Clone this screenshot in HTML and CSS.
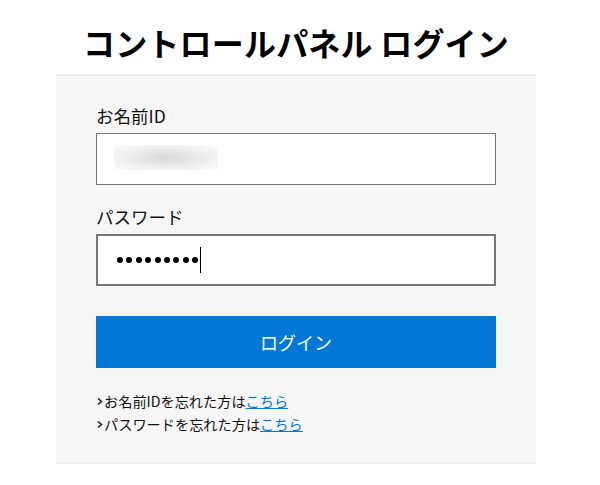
FILE: index.html
```html
<!DOCTYPE html>
<html lang="ja">
<head>
<meta charset="utf-8">
<title>コントロールパネル ログイン</title>
<link rel="stylesheet" href="styles.css">
</head>
<body>
<div class="wrap">
  <h1 class="title">コントロールパネル ログイン</h1>
  <form class="panel">
    <div class="group">
      <label class="label" for="uid">お名前ID</label>
      <input class="input input-id" id="uid" type="text" value="" readonly>
    </div>
    <div class="group">
      <label class="label">パスワード</label>
      <div class="input input-focus">
        <span class="dots"><i></i><i></i><i></i><i></i><i></i><i></i><i></i><i></i><i></i></span><span class="caret"></span>
      </div>
    </div>
    <button class="btn" type="button">ログイン</button>
    <ul class="links">
      <li><svg class="chev" width="8" height="9" viewBox="0 0 8 9"><path d="M2 1.5 L5.5 4.5 L2 7.5" fill="none" stroke="#222" stroke-width="1.6"/></svg>お名前IDを忘れた方は<a href="#">こちら</a></li>
      <li><svg class="chev" width="8" height="9" viewBox="0 0 8 9"><path d="M2 1.5 L5.5 4.5 L2 7.5" fill="none" stroke="#222" stroke-width="1.6"/></svg>パスワードを忘れた方は<a href="#">こちら</a></li>
    </ul>
  </form>
</div>
</body>
</html>
```
FILE: styles.css
```css
* { box-sizing: border-box; }
html, body { margin: 0; padding: 0; background: #fff; }
body {
  font-family: "Noto Sans CJK JP", "Noto Sans", sans-serif;
  color: #111;
}
.wrap {
  width: 480px;
  margin-left: 56px;
}
.title {
  margin: 22px 0 12px;
  font-size: 32px;
  line-height: 40px;
  font-weight: 700;
  text-align: center;
  color: #000;
  letter-spacing: 0.2px;
}
.panel {
  display: flex;
  flex-direction: column;
  background: #f6f6f6;
  border-top: 2px solid #ebebeb;
  border-bottom: 2px solid #ebebeb;
  padding: 28px 40px 26px;
  margin: 0;
}
.group {
  display: flex;
  flex-direction: column;
  margin-bottom: 20px;
}
.label {
  font-size: 17.5px;
  line-height: 24px;
  margin-bottom: 5px;
  color: #111;
}
.input {
  display: flex;
  align-items: center;
  width: 400px;
  height: 52px;
  border: 1px solid #767676;
  background: #fff;
  margin: 0;
  padding: 0 20px;
  font: inherit;
}
.input-id {
  background:
    radial-gradient(ellipse at center, #dadada 0%, #e6e6e6 35%, #f3f3f3 70%, #fdfdfd 100%) no-repeat 17px 11px / 104px 25px,
    #fff;
  outline: none;
}
.input-focus {
  border: 2px solid #767676;
  padding-left: 19px;
}
.dots {
  display: flex;
  gap: 3.4px;
}
.dots i {
  display: block;
  width: 6px;
  height: 6px;
  border-radius: 50%;
  background: #000;
}
.caret {
  display: block;
  width: 1px;
  height: 26px;
  background: #000;
  margin-left: 2px;
}
.btn {
  margin-top: 10px;
  width: 400px;
  height: 52px;
  border: 0;
  background: #0078d7;
  color: #fff;
  font-family: inherit;
  font-size: 18px;
  padding: 0;
}
.links {
  list-style: none;
  margin: 22px 0 0;
  padding: 0;
  font-size: 14.2px;
  line-height: 23px;
  color: #111;
}
.links li {
  display: flex;
  align-items: center;
  height: 23px;
}
.chev {
  display: block;
  flex: none;
  margin-right: 0;
}
.links a {
  color: #0078d7;
  text-decoration: underline;
}
```
